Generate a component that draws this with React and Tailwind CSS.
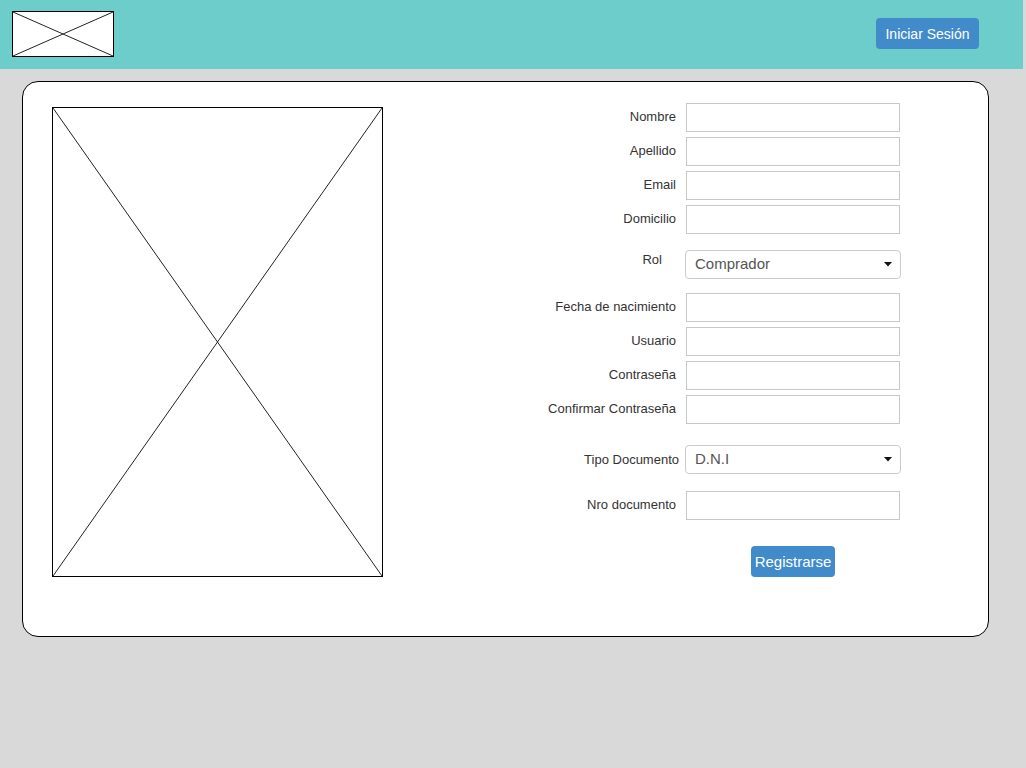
import React from "react";

function Cross({ className }) {
  return (
    <svg className={className} preserveAspectRatio="none" viewBox="0 0 100 100">
      <line x1="0" y1="0" x2="100" y2="100" stroke="#222" strokeWidth="1" vectorEffect="non-scaling-stroke" />
      <line x1="100" y1="0" x2="0" y2="100" stroke="#222" strokeWidth="1" vectorEffect="non-scaling-stroke" />
    </svg>
  );
}

function Row({ label, mt = "", labelCls = "" }) {
  return (
    <div className={`flex items-center ${mt}`}>
      <div className={`w-[160px] pr-[10px] pb-[2px] text-right whitespace-nowrap text-[13px] leading-none text-[#333] ${labelCls}`}>{label}</div>
      <div className="w-[214px] h-[29px] border border-[#c8c8c8] bg-white"></div>
    </div>
  );
}

function SelectRow({ label, value, mt = "", labelCls = "", itemsCls = "items-center" }) {
  return (
    <div className={`flex ${itemsCls} ${mt}`}>
      <div className={`w-[159px] text-right whitespace-nowrap text-[13px] leading-none text-[#333] ${labelCls}`}>{label}</div>
      <div className="w-[216px] h-[29px] border border-[#cccccc] rounded-[4px] bg-white flex items-center justify-between pl-[9px] pr-[8px]">
        <span className="text-[15px] text-[#555]">{value}</span>
        <svg width="8" height="5" viewBox="0 0 8 5"><polygon points="0,0 8,0 4,4.5" fill="#111" /></svg>
      </div>
    </div>
  );
}

export default function App() {
  return (
    <div className="w-[1026px] h-[768px] bg-[#d9d9d9] overflow-hidden" style={{ fontFamily: '"Liberation Sans", Arial, sans-serif' }}>
      <header className="w-[1023px] h-[69px] bg-[#6ccdcb] flex items-start justify-between">
        <div className="ml-[12px] mt-[11px] w-[102px] h-[46px] border border-black bg-white">
          <Cross className="w-full h-full block" />
        </div>
        <button className="mt-[18px] mr-[44px] w-[103px] h-[31px] rounded-[4px] bg-[#428bca] text-white text-[14px] leading-none">
          Iniciar Sesión
        </button>
      </header>
      <div className="ml-[22px] mt-[12px] w-[967px] h-[556px] bg-white border border-black rounded-[16px] flex items-start pl-[29px] pt-[25px]">
        <div className="w-[331px] h-[470px] border border-black shrink-0">
          <Cross className="w-full h-full block" />
        </div>
        <div className="ml-[143px] -mt-[4px] flex flex-col">
          <Row label="Nombre" />
          <Row label="Apellido" mt="mt-[5px]" />
          <Row label="Email" mt="mt-[5px]" />
          <Row label="Domicilio" mt="mt-[5px]" />
          <SelectRow label="Rol" value="Comprador" mt="mt-[16px]" labelCls="pr-[23px] pt-[3px]" itemsCls="items-start" />
          <Row label="Fecha de nacimiento" mt="mt-[14px]" />
          <Row label="Usuario" mt="mt-[5px]" />
          <Row label="Contraseña" mt="mt-[5px]" />
          <Row label="Confirmar Contraseña" mt="mt-[5px]" />
          <SelectRow label="Tipo Documento" value="D.N.I" mt="mt-[21px]" labelCls="pr-[6px]" />
          <Row label="Nro documento" mt="mt-[17px]" />
          <div className="flex mt-[26px]">
            <div className="w-[160px]"></div>
            <div className="w-[214px] flex justify-center">
              <button className="w-[84px] h-[31px] rounded-[4px] bg-[#428bca] text-white text-[15px] leading-none">
                Registrarse
              </button>
            </div>
          </div>
        </div>
      </div>
    </div>
  );
}
